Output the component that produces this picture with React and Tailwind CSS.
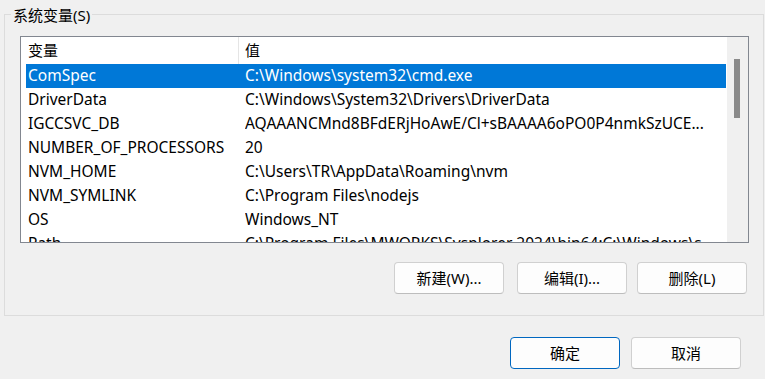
import React from 'react'

const rows = [
  ['ComSpec', 'C:\\Windows\\system32\\cmd.exe'],
  ['DriverData', 'C:\\Windows\\System32\\Drivers\\DriverData'],
  ['IGCCSVC_DB', 'AQAAANCMnd8BFdERjHoAwE/Cl+sBAAAA6oPO0P4nmkSzUCE...'],
  ['NUMBER_OF_PROCESSORS', '20'],
  ['NVM_HOME', 'C:\\Users\\TR\\AppData\\Roaming\\nvm'],
  ['NVM_SYMLINK', 'C:\\Program Files\\nodejs'],
  ['OS', 'Windows_NT'],
  ['Path', 'C:\\Program Files\\MWORKS\\Sysplorer 2024\\bin64;C:\\Windows\\system32;C:\\Windows'],
]

const Button = ({ label, primary = false, className = '' }) => (
  <button
    className={`w-[110px] h-[32px] rounded-[4px] bg-[#fdfdfd] flex items-center justify-center leading-none
      ${primary ? 'border border-[#0067c0]' : 'border border-[#d0d0d0] border-b-[#bdbdbd]'} ${className}`}
  >
    {label}
  </button>
)

export default function App() {
  return (
    <div className="w-[765px] h-[379px] overflow-hidden bg-[#f0f0f0] text-[15px] text-black font-['Noto_Sans','Noto_Sans_CJK_SC',sans-serif]">
      {/* group box */}
      <div className="pt-[14px] pl-[4px]">
        <div className="relative w-[760px] h-[302px] border border-[#dcdcdc] px-[15px] pt-[21px]">
          <span className="absolute left-[6px] top-[-10px] px-[2px] bg-[#f0f0f0] leading-[20px]">系统变量(S)</span>

          {/* list view */}
          <div className="w-[729px] h-[207px] border border-[#828790] bg-white flex">
            <div className="w-[705px] flex flex-col overflow-hidden text-[15.5px]">
              <div className="h-[27px] shrink-0 flex items-stretch text-[15px]">
                <div className="w-[217px] pl-[7px] flex items-center">变量</div>
                <div className="w-px bg-[#e5e5e5]" />
                <div className="pl-[6px] flex items-center">值</div>
              </div>
              {rows.map(([name, value], i) => (
                <div
                  key={name}
                  className={`ml-[5px] h-[24px] shrink-0 pl-[2px] flex items-center whitespace-nowrap
                    ${i === 0 ? 'bg-[#0078d7] text-white' : ''}`}
                >
                  <span className="w-[217px] shrink-0">{name}</span>
                  <span className="w-[476px] truncate">{value}</span>
                </div>
              ))}
            </div>
            <div className="w-[22px] bg-[#f0f0f0] border-l border-white pt-[22px]">
              <div className="ml-[7px] w-[6px] h-[59px] bg-[#8a8a8a]" />
            </div>
          </div>

          {/* list actions */}
          <div className="mt-[19px] pr-px flex justify-end">
            <Button label="新建(W)..." />
            <Button label="编辑(I)..." className="ml-[13px]" />
            <Button label="删除(L)" className="ml-[10px]" />
          </div>
        </div>
      </div>

      {/* dialog buttons */}
      <div className="mt-[21px] pr-[24px] flex justify-end gap-[11px]">
        <Button label="确定" primary />
        <Button label="取消" />
      </div>
    </div>
  )
}
